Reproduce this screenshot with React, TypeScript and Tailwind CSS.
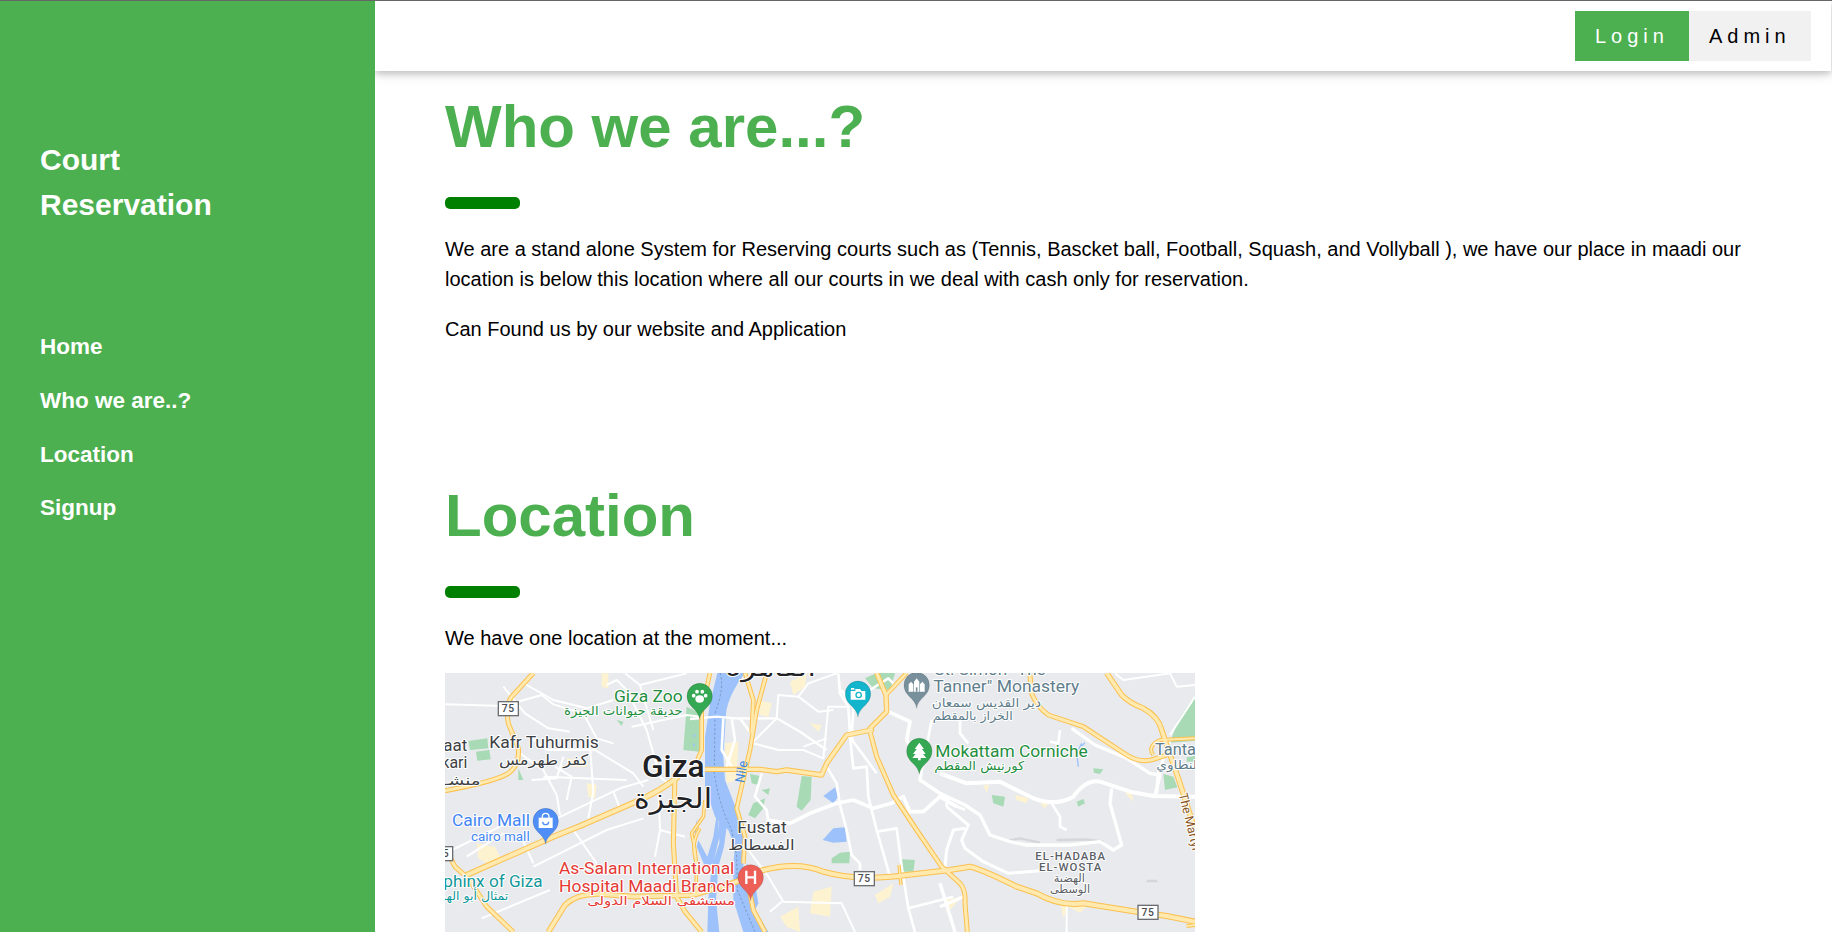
import type { ReactNode } from "react";

const OFFSETS = [0, 750, 1500];
type Line = [number, string, number?];

const minorRoads: Line[] = [
  [0, "M15 103 L190 108 L305 75 L340 103 L430 130 L470 205 L520 220"],
  [0, "M255 42 L340 90 L440 115 L520 90"],
  [0, "M190 50 L255 130 L325 175 L390 185"],
  [0, "M500 45 L530 30 L560 60 L620 180 L660 320 L690 345 M555 10 L600 45 L740 10"],
  [0, "M575 170 L740 135 L780 140 M600 45 L640 180"],
  [0, "M240 250 L310 300 L350 375 L360 435"],
  [0, "M270 200 L320 240 L465 240 L580 310 L610 350 M310 320 L560 330"],
  [0, "M345 290 L395 320 L380 390 M450 230 L460 365 L445 445"],
  [0, "M350 445 L540 355 L625 330 M275 330 L350 325 L370 260"],
  [0, "M400 480 L470 580 M520 365 L540 415"],
  [0, "M15 550 L200 460 M80 560 L190 490 M250 515 L280 580"],
  [0, "M125 745 L330 660 M280 590 L500 480 L610 445"],
  [0, "M655 350 L660 480 L645 560 M660 480 L735 500"],
  [750, "M0 147 L80 140 L135 145 L260 145 L330 185 L410 240", 7],
  [750, "M125 145 L135 210 L110 290 M150 145 L190 200 M100 145 L95 240 L125 290", 8],
  [750, "M260 145 L265 75 L325 80 L355 40 L440 10 M325 80 L385 125 L430 120"],
  [750, "M190 220 L265 240 L340 240 L400 265 L415 110 L470 110"],
  [750, "M340 230 L410 205 M260 145 L190 215"],
  [750, "M445 10 L450 70 L475 110 L480 190 L490 215 L560 310 M485 200 L490 115 L455 60", 8],
  [750, "M410 290 L440 340 L450 405 L470 480 L485 555 L510 580 L510 600 M480 200 L490 295 L530 290 L535 380 L560 480 L600 620", 8],
  [750, "M230 450 L300 460 L360 430 L440 400 L490 390 L550 415 L605 400 L640 380 L660 425 L700 425 L750 380 L800 410", 11],
  [750, "M215 310 L195 380 L230 420 L235 455", 8],
  [750, "M560 485 L620 475 L635 590 L655 715 L675 786 M655 715 L790 680", 8],
  [750, "M175 540 L235 620 L280 695 L455 700 L495 786 M275 695 L240 725"],
  [750, "M595 125 L660 155 L650 210 L695 290 L690 330 L780 390", 11],
  [750, "M725 150 L710 230 M540 60 L595 25 L610 40", 8],
  [1500, "M0 310 L80 340 L180 335 L280 385 Q350 410 400 380 Q440 325 480 335 L570 365 L640 378 L765 380", 12],
  [1500, "M395 175 L465 225 L560 265 L630 310 L660 315 L645 375", 10],
  [1500, "M0 370 L75 405 L120 435 L150 495 L210 515 L260 525 L390 525 L480 515 L520 540 L545 525 L510 400 L515 355", 10],
  [1500, "M20 410 L20 395 L75 420 M20 410 L85 465 L65 510 L75 535 L130 575 L205 610 L300 602", 9],
  [1500, "M75 475 L40 480 L20 540 L15 590", 9],
  [1500, "M335 400 L360 440 L360 470 L380 480 M60 150 L60 190 L85 220 M360 180 L355 220 L330 215", 8],
  [1500, "M525 10 L550 30 L690 10 L710 50 L765 45 M765 80 L690 195 M380 700 L380 786"],
  [1500, "M0 640 L45 786 M0 710 L70 680 M690 210 L655 310 L650 370", 10],
];

const majorRoads: Line[] = [
  [0, "M280 9 L215 80 Q195 105 205 160 L235 235 Q240 285 205 310 Q165 335 15 362", 15],
  [0, "M25 552 L45 590 L85 625 L140 710 L220 786", 15],
  [0, "M80 615 L340 500 L420 468 L600 390 Q665 360 715 320", 18],
  [0, "M325 786 L375 705 Q410 670 480 672 L580 680 L760 675 L860 645 L905 630", 17],
  [0, "M705 310 L700 520 L710 680 L735 725 L785 786", 15],
  [0, "M780 475 Q750 520 770 580 L768 670", 11],
  [750, "M60 9 L35 120 L35 240 L20 275", 14],
  [750, "M45 298 L210 298 L260 305 L290 300 L395 315 L410 280 L470 195 L545 180 L540 175 L590 125 L588 75 L560 9", 16],
  [750, "M588 75 L650 9", 14],
  [750, "M230 9 L200 120 L180 240 L140 415 L165 500 L160 580", 14],
  [750, "M165 9 L190 90 L185 190", 14],
  [750, "M45 390 L40 440 L5 490 L15 540 L20 590", 11],
  [750, "M160 620 Q300 565 400 605 Q500 635 650 615 L780 600 L840 590 Q880 600 980 650 L1040 670 Q1110 710 1180 700 L1340 725 L1430 738 L1515 755", 18],
  [750, "M180 670 L190 720 L225 786", 15],
  [750, "M540 185 L560 260 L610 375 L690 495 L755 590 L810 640 Q828 660 825 700 L832 786", 15],
  [750, "M627 585 L633 645 M0 740 L35 786", 10],
  [1500, "M270 15 L275 70 Q290 110 325 135 L430 170 L560 255 Q600 280 640 268 L680 255", 15],
  [1500, "M500 9 L545 75 Q570 100 610 115 Q655 140 665 180 L685 240 L715 325 L765 480", 17],
  [1500, "M640 255 Q620 230 660 210 L765 205 M765 765 L740 768", 12],
];

const parks: Line[] = [
  [0, "M85 213 L142 205 L145 235 L90 240Z M108 245 L148 240 L152 268 L112 272Z M235 295 L250 330 L235 330Z"],
  [0, "M740 110 L780 130 L780 245 L730 240Z M530 150 L550 155 L545 168Z"],
  [750, "M0 155 L25 150 L20 238 L0 240Z M180 312 L210 318 L205 345 L185 340Z M190 400 L225 385 L220 415 L195 445 L175 435Z M215 360 L240 355 L235 375Z"],
  [750, "M335 318 L365 320 L362 390 L335 422 L320 410Z M425 565 L450 548 L480 545 L478 580 L425 580Z M635 568 L675 570 L670 605 L640 605Z"],
  [750, "M525 25 L560 9 L615 9 L600 60 L550 55Z"],
  [1500, "M765 75 L765 212 L690 218 L715 150Z M670 312 L700 320 L712 352 L675 360Z M155 375 L195 380 L190 410 L160 400Z M460 295 L490 298 L480 312 L462 308Z M410 395 L430 387 L435 400 L415 410Z M740 262 L765 258 L765 275 L740 275Z"],
];

const builtUp: Line[] = [
  [0, "M485 10 L505 10 L505 55 L485 50Z M110 520 L165 530 L185 570 L155 590 L115 565Z M440 340 L470 345 L465 385 L445 380Z M450 580 L490 590 L485 610 L455 610Z M380 265 L445 275 L440 290 L385 290Z"],
  [750, "M105 220 L145 215 L140 330 L110 340Z M205 90 L245 100 L235 140 L210 135Z M300 35 L350 10 L345 50 L310 75Z M555 675 L610 640 L600 680 L565 700Z M270 740 L325 710 L330 786 L290 770Z M370 665 L425 650 L420 740 L360 730Z M360 160 L395 165 L385 185Z"],
  [1500, "M225 375 L265 385 L260 400 L230 390Z M130 345 L148 345 L140 368Z M555 368 L575 370 L580 395Z M360 695 L440 710 L420 728 L385 710 L370 745Z M15 690 L65 680 L20 730Z M300 400 L325 400 L315 415Z"],
];

function Lines({ items, stroke, extra = 0 }: { items: Line[]; stroke: string; extra?: number }) {
  return (
    <g fill="none" stroke={stroke} strokeLinejoin="round">
      {items.map(([x, d, w = 6], i) => (
        <path key={i} d={d} transform={`translate(${x} 0)`} strokeWidth={w + extra} />
      ))}
    </g>
  );
}

function Areas({ items, fill }: { items: Line[]; fill: string }) {
  return (
    <g fill={fill}>
      {items.map(([x, d], i) => (
        <path key={i} d={d} transform={`translate(${x} 0)`} />
      ))}
    </g>
  );
}

function Pin({ x, y, color, children }: { x: number; y: number; color: string; children: ReactNode }) {
  return (
    <g transform={`translate(${x} ${y})`}>
      <path d="M0 70 C-4 38 -38 34 -38 0 A38 38 0 0 1 38 0 C38 34 4 38 0 70Z" fill={color} stroke="#0003" strokeWidth="2" />
      {children}
    </g>
  );
}

function Shield({ x, y }: { x: number; y: number }) {
  return (
    <g>
      <rect x={x - 30} y={y - 21} width="60" height="42" fill="#fff" stroke="#6b6f73" strokeWidth="4" />
      <text x={x} y={y + 11} fontSize="31" fontWeight="500" textAnchor="middle" fill="#4a4d50" letterSpacing="2">75</text>
    </g>
  );
}

type LabelProps = {
  x: number; y: number; size: number; fill?: string; width?: number;
  anchor?: "start" | "middle" | "end"; weight?: number; arabic?: boolean; spacing?: number; children: string;
};

function Label({ x, y, size, fill = "#3c4043", width, anchor = "start", weight = 400, arabic, spacing, children }: LabelProps) {
  return (
    <text
      x={x}
      y={y}
      fontSize={size}
      fill={fill}
      fontWeight={weight}
      textAnchor={anchor}
      textLength={width}
      lengthAdjust="spacingAndGlyphs"
      letterSpacing={spacing}
      className={arabic ? "font-['DejaVu_Sans',sans-serif]" : "font-[Roboto,sans-serif]"}
    >
      {children}
    </text>
  );
}

function CityMap() {
  const green = "#1e8e3e";
  const slate = "#607d8b";
  const red = "#e53935";
  const teal = "#12979b";
  return (
    <svg className="block h-[259px] w-[750px] shrink-0 font-[Roboto,sans-serif]" viewBox="15 9 2250 777">
      <rect x="15" y="9" width="2250" height="777" fill="#e8eaed" />
      <Areas items={builtUp} fill="#fef3d0" />
      <Areas items={parks} fill="#a8dab5" />
      <g fill="#9dc2fb" transform={`translate(${OFFSETS[1]} 0)`}>
        <path d="M82 9 L165 9 Q115 75 108 130 L100 260 L105 330 L140 420 L165 500 L160 590 L180 690 L235 786 L160 786 L130 690 L130 580 L135 530 L115 480 L75 440 L45 350 L45 200 L60 100Z" />
        <path d="M60 370 L110 470 L102 530 L85 590 L78 690 L88 786 L52 786 L55 690 L65 590 L88 520 L85 440Z" />
        <path d="M82 420 L70 500 L52 560 L25 510 L20 530 L45 590 L70 580 L88 500Z M22 445 L12 485 L18 490Z" />
        <path d="M400 378 L435 352 L445 380 L430 400Z M398 510 L430 475 L465 472 L470 515 L430 518Z" />
        <path d="M170 580 L190 610 L205 700 L190 730Z" />
        <path d="M12 190 l5 8 l-8 4Z M8 220 l8 4 l-6 6Z" />
      </g>
      <path d="M1925 220 L1910 250 L1915 290 M1935 218 L1925 228" fill="none" stroke="#9dc2fb" strokeWidth="4" />
      <path d="M1700 513 L1740 505 L1800 518 M1850 510 L1940 508 L1990 515 M2120 633 h32" fill="none" stroke="#d4d6d9" strokeWidth="7" />
      <path d="M840 9 Q855 50 825 130 L823 310 Q835 400 875 480 L890 560 L892 660 L945 786" fill="none" stroke="#7898c4" strokeWidth="3" strokeDasharray="7 6" />
      <Lines items={minorRoads} stroke="#fff" />
      <Lines items={majorRoads} stroke="#fbc04e" />
      <Lines items={majorRoads} stroke="#ffe9ae" extra={-6} />

      <Pin x={779} y={78} color="#34a853">
        <g fill="#fff">
          <ellipse cx="0" cy="9" rx="13" ry="11" />
          <circle cx="-18" cy="-1" r="5.5" /><circle cx="-8" cy="-13" r="5.5" />
          <circle cx="8" cy="-13" r="5.5" /><circle cx="18" cy="-1" r="5.5" />
        </g>
      </Pin>
      <Pin x={1254} y={71} color="#12b5cb">
        <path d="M-22 -8 H-8 V-14 H6 L10 -8 H22 V18 H-22Z M-21 -17 H-11 V-12 H-21Z" fill="#fff" />
        <circle cx="2" cy="4" r="8" fill="none" stroke="#12b5cb" strokeWidth="4" />
      </Pin>
      <Pin x={1430} y={45} color="#78909c">
        <path d="M-24 20 V-2 L-17 -10 L-10 -2 V20Z M-8 20 V-10 L0 -20 L8 -10 V20Z M10 20 V-2 L17 -10 L24 -2 V20Z" fill="#fff" />
        <path d="M0 20 V7" stroke="#78909c" strokeWidth="5" />
      </Pin>
      <Pin x={1438} y={243} color="#34a853">
        <path d="M0 -25 L14 -6 H8 L19 9 H11 L21 21 H4 V28 H-4 V21 H-21 L-11 9 H-19 L-8 -6 H-14Z" fill="#fff" />
      </Pin>
      <Pin x={317} y={453} color="#4f8ef7">
        <path d="M-21 -10 H21 V21 H-21Z" fill="#fff" />
        <path d="M-10 -8 V-13 A10 10 0 0 1 10 -13 V-8" fill="none" stroke="#fff" strokeWidth="4" />
        <path d="M-9 2 A9 9 0 0 0 9 2" fill="none" stroke="#4f8ef7" strokeWidth="4" />
      </Pin>
      <Pin x={932} y={622} color="#ec6058">
        <path d="M-13 -20 V20 M13 -20 V20 M-13 0 H13" fill="none" stroke="#fff" strokeWidth="7" />
      </Pin>
      <Shield x={205} y={116} />
      <Shield x={8} y={551} />
      <Shield x={1273} y={626} />
      <Shield x={2124} y={727} />

      <g stroke="#fff" strokeWidth="6" strokeLinejoin="round" paintOrder="stroke">
        <Label x={522} y={96} size={49} width={206} fill={green}>Giza Zoo</Label>
        <Label x={728} y={136} size={37} width={356} fill={green} anchor="end" arabic>حديقة حيوانات الجيزة</Label>
        <Label x={10} y={243} size={48} width={72}>aat</Label>
        <Label x={4} y={294} size={48} width={78}>kari</Label>
        <Label x={122} y={344} size={40} width={112} anchor="end" arabic>منشـ</Label>
        <Label x={148} y={234} size={49} width={328}>Kafr Tuhurmis</Label>
        <Label x={311} y={284} size={44} width={268} anchor="middle" arabic>كفر طهرمس</Label>
        <Label x={606} y={320} size={93} width={188} weight={500} fill="#202124">Giza</Label>
        <Label x={699} y={413} size={84} width={234} anchor="middle" fill="#202124" arabic>الجيزة</Label>
        <Label x={36} y={467} size={49} width={234} fill="#4285f4">Cairo Mall</Label>
        <Label x={93} y={512} size={41} width={176} fill="#4285f4">cairo mall</Label>
        <Label x={10} y={650} size={49} width={298} fill={teal}>phinx of Giza</Label>
        <Label x={205} y={690} size={37} width={232} anchor="end" fill={teal} arabic>تمثال أبو الهول</Label>
        <Label x={357} y={612} size={49} width={526} fill={red}>As-Salam International</Label>
        <Label x={357} y={666} size={49} width={528} fill={red}>Hospital Maadi Branch</Label>
        <Label x={885} y={706} size={37} width={443} anchor="end" fill={red} arabic>مستشفى السلام الدولى</Label>
        <Label x={992} y={18} size={76} width={272} anchor="middle" fill="#202124" arabic>القاهرة</Label>
        <Label x={892} y={490} size={50} width={148}>Fustat</Label>
        <Label x={964} y={540} size={43} width={200} anchor="middle" arabic>الفسطاط</Label>
        <Label x={1483} y={14} size={49} width={334} fill={slate}>St. Simon "The</Label>
        <Label x={1480} y={67} size={49} width={438} fill={slate}>Tanner" Monastery</Label>
        <Label x={1803} y={110} size={37} width={328} anchor="end" fill={slate} arabic>دير القديس سمعان</Label>
        <Label x={1718} y={151} size={37} width={240} anchor="end" fill={slate} arabic>الخراز بالمقطم</Label>
        <Label x={1486} y={261} size={49} width={457} fill={green}>Mokattam Corniche</Label>
        <Label x={1753} y={300} size={37} width={270} anchor="end" fill={green} arabic>كورنيش المقطم</Label>
        <Label x={2145} y={255} size={49} fill={slate}>Tantawy</Label>
        <Label x={2149} y={298} size={37} width={122} fill={slate} arabic>لنطاوي</Label>
        <Label x={1786} y={570} size={34} width={212} weight={500} fill="#5b6066" spacing={3}>EL-HADABA</Label>
        <Label x={1797} y={603} size={34} width={190} weight={500} fill="#5b6066" spacing={3}>EL-WOSTA</Label>
        <Label x={1888} y={637} size={34} width={94} anchor="middle" fill="#5b6066" arabic>الهضبة</Label>
        <Label x={1890} y={670} size={34} width={120} anchor="middle" fill="#5b6066" arabic>الوسطى</Label>
        <g transform="translate(896 337) rotate(-80)" strokeWidth="0">
          <Label x={0} y={16} size={40} width={66} fill="#3f87dd">Nile</Label>
        </g>
        <g transform="translate(2216 373) rotate(76)">
          <Label x={0} y={0} size={37} fill="#8a5521">The Martyr</Label>
        </g>
      </g>
    </svg>
  );
}

const links = ["Home", "Who we are..?", "Location", "Signup"];

function SectionTitle({ children }: { children: string }) {
  return (
    <>
      <h1 className="text-[60px] leading-[90px] font-bold text-[#4caf50]">{children}</h1>
      <div className="mt-[25px] h-3 w-[75px] rounded-[5px] bg-[#008000]" />
    </>
  );
}

export default function App() {
  return (
    <div className="flex h-[932px] w-full overflow-hidden border-t border-[#666] bg-white font-['Liberation_Sans',Arial,sans-serif]">
      <nav className="z-20 flex w-[375px] shrink-0 flex-col bg-[#4caf50] px-10 pt-[136px] font-bold text-white">
        <h3 className="text-[30px] leading-[45px]">Court<br />Reservation</h3>
        <ul className="mt-[93px] flex flex-col text-[22.5px] leading-[53.75px]">
          {links.map((link) => (
            <li key={link}><a href="#">{link}</a></li>
          ))}
        </ul>
      </nav>
      <div className="flex min-w-0 flex-1 flex-col">
        <header className="z-10 mr-px flex h-[70px] shrink-0 items-start justify-end bg-white pt-2.5 pr-5 text-[20px] leading-[30px] tracking-[5px] shadow-[0_2.5px_6px_rgba(0,0,0,0.16),0_2.5px_12px_rgba(0,0,0,0.12)]">
          <a href="#" className="h-[50px] w-[114px] bg-[#4caf50] px-5 py-2.5 text-white">Login</a>
          <a href="#" className="h-[50px] w-[122px] bg-[#f1f1f1] px-5 py-2.5 text-black">Admin</a>
        </header>
        <main className="flex flex-col pt-[11px] pr-[70px] pl-[70px] text-[20px] leading-[30px] text-black">
          <SectionTitle>Who we are...?</SectionTitle>
          <p className="mt-[25px]">
            We are a stand alone System for Reserving courts such as (Tennis, Bascket ball, Football, Squash, and Vollyball ), we have our place in maadi our location is below this location where all our courts in we deal with cash only for reservation.
          </p>
          <p className="mt-5 mb-[127px]">Can Found us by our website and Application</p>
          <SectionTitle>Location</SectionTitle>
          <p className="mt-[25px] mb-5">We have one location at the moment...</p>
          <CityMap />
        </main>
      </div>
    </div>
  );
}
